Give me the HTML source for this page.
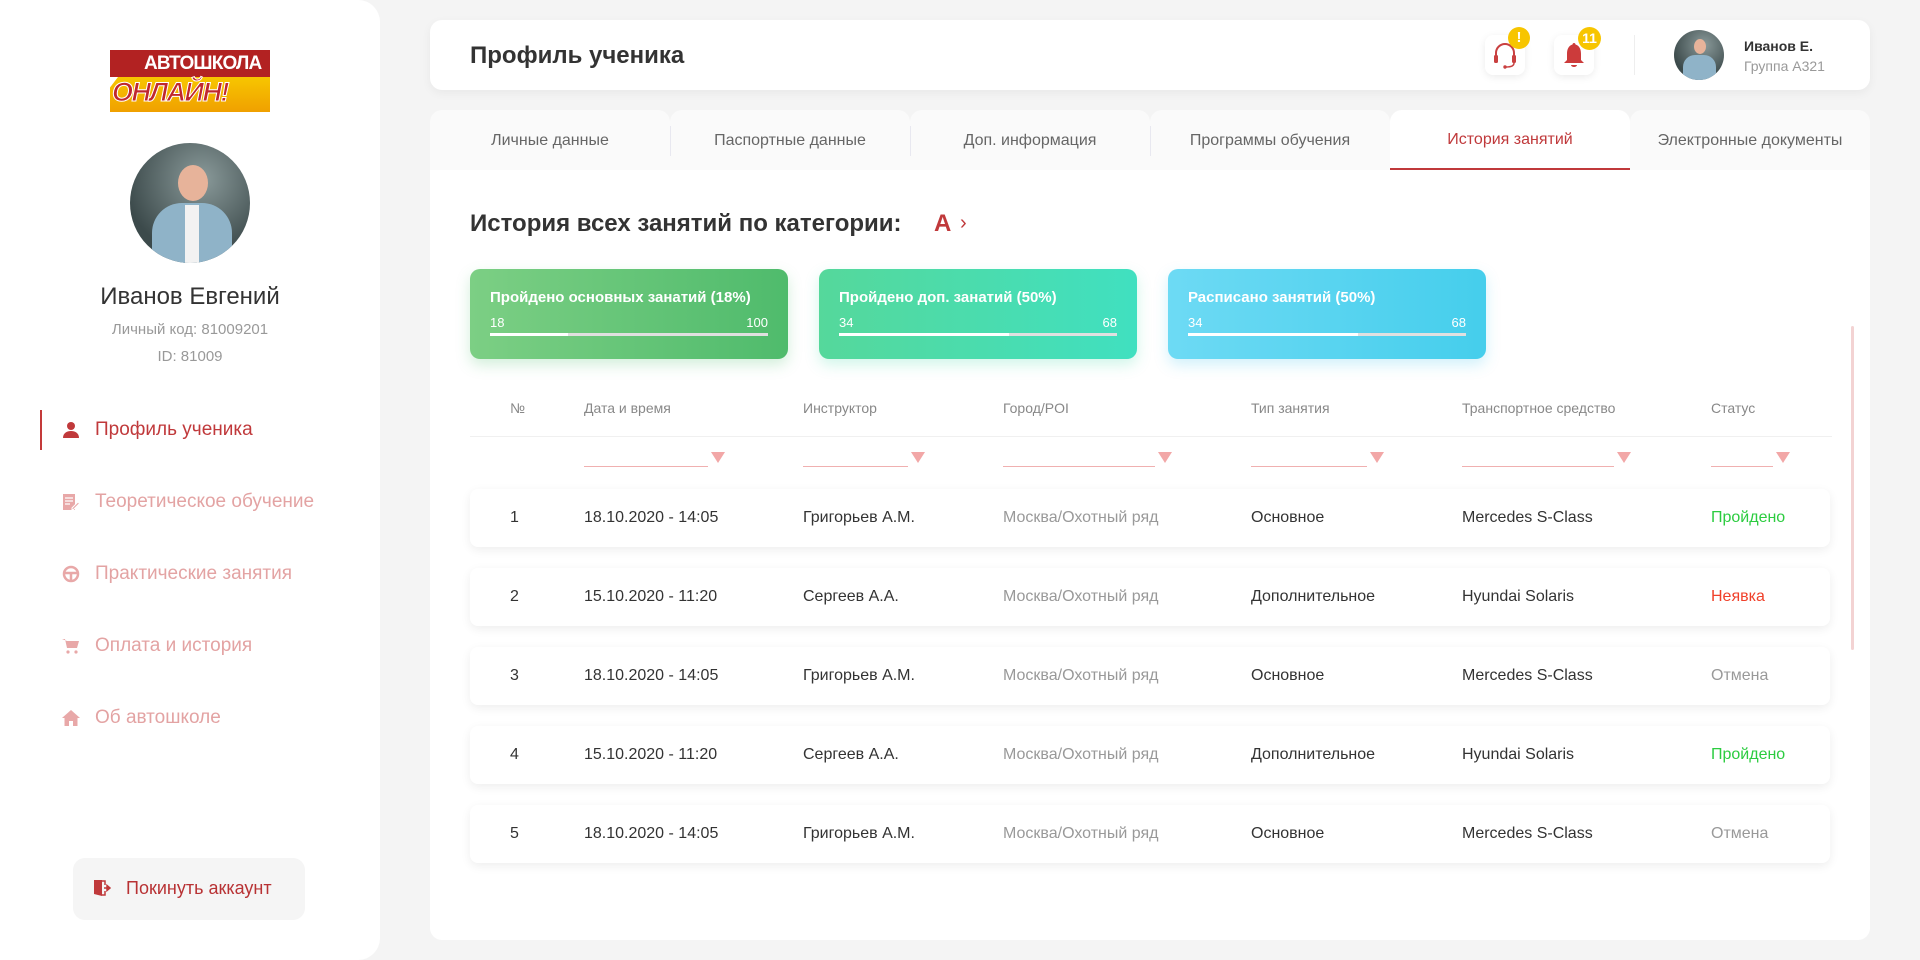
<!DOCTYPE html>
<html><head><meta charset="utf-8"><style>
*{box-sizing:border-box;margin:0;padding:0}
body{width:1920px;height:960px;background:#f4f4f4;font-family:"Liberation Sans",sans-serif;position:relative;overflow:hidden;color:#333}
.abs{position:absolute}
.side{left:0;top:0;width:380px;height:960px;background:#fff;border-radius:0 22px 22px 0}
.nav{position:absolute;left:62px;font-size:19px;color:#e3a3a3;display:flex;align-items:center;gap:15px;height:30px}
.nav svg{width:18px;height:18px}
.card{background:#fff;border-radius:12px}
.tab{position:absolute;top:110px;height:60px;width:240px;background:#fafafa;border-radius:12px 12px 0 0;font-size:16px;color:#666;display:flex;align-items:center;justify-content:center;padding-top:2px}
.stat{position:absolute;top:269px;width:318px;height:90px;border-radius:10px;color:#fff;padding:20px 20px}
.stat .t{font-size:15px;font-weight:bold}
.stat .n{display:flex;justify-content:space-between;font-size:13px;margin-top:9px}
.stat .b{height:3px;background:#e0e0e0;margin-top:3px;position:relative}
.stat .b i{position:absolute;left:0;top:0;height:3px;background:#fff}
.th{position:absolute;top:400px;font-size:14px;color:#888}
.flt{position:absolute;top:451px;height:16px;border-bottom:1px solid #f0b0b0}
.flt:after{content:"";position:absolute;right:-17px;top:1px;border-left:7px solid transparent;border-right:7px solid transparent;border-top:11px solid #f2a7a7}
.row{position:absolute;left:470px;width:1360px;height:58px;background:#fff;border-radius:8px;box-shadow:0 3px 10px rgba(0,0,0,.07);font-size:16px;color:#333}
.row span{position:absolute;top:20px}
.g{color:#999}
</style></head><body>
<div class="abs side"></div>
<!-- logo -->
<div class="abs" style="left:110px;top:50px;width:160px;height:62px;overflow:hidden">
<div style="position:absolute;left:0;top:0;width:160px;height:27px;background:#b22222"></div>
<div style="position:absolute;left:34px;top:3px;font-size:19px;font-weight:bold;color:#fff;letter-spacing:-0.8px">АВТОШКОЛА</div>
<div style="position:absolute;left:0;top:27px;width:160px;height:35px;background:linear-gradient(#f7c600,#f0a000);clip-path:polygon(5% 0,100% 0,100% 100%,0 100%,0 30%)"></div>
<div style="position:absolute;left:2px;top:27px;font-size:27px;font-weight:bold;font-style:italic;color:#c0272d;-webkit-text-stroke:1px #fff;letter-spacing:-1.5px">ОНЛАЙН!</div>
</div>
<!-- avatar -->
<div class="abs" style="left:130px;top:143px;width:120px;height:120px;border-radius:50%;background:radial-gradient(circle at 60% 30%,#8a9a9a,#3c4a4b 70%);overflow:hidden">
<div style="position:absolute;left:48px;top:22px;width:30px;height:36px;border-radius:50%;background:#e7b39a"></div>
<div style="position:absolute;left:22px;top:60px;width:80px;height:70px;border-radius:30px 30px 0 0;background:#8fb3c8"></div>
<div style="position:absolute;left:55px;top:62px;width:14px;height:60px;background:#f2f2f2"></div>
</div>
<div class="abs" style="left:0;width:380px;top:283px;text-align:center;font-size:24px;color:#333">Иванов Евгений</div>
<div class="abs" style="left:0;width:380px;top:321px;text-align:center;font-size:15px;color:#999">Личный код: 81009201</div>
<div class="abs" style="left:0;width:380px;top:348px;text-align:center;font-size:15px;color:#999">ID: 81009</div>
<div class="abs" style="left:40px;top:410px;width:2px;height:40px;background:#c43a3a"></div>
<div class="nav" style="top:415px;color:#c0393b"><svg viewBox="0 0 18 18"><circle cx="9" cy="5" r="4" fill="#c0393b"/><path d="M1 17c0-5 4-7 8-7s8 2 8 7z" fill="#c0393b"/></svg>Профиль ученика</div>
<div class="nav" style="top:487px"><svg viewBox="0 0 18 18"><rect x="1" y="1" width="12" height="16" fill="#e8a8a8"/><path d="M3 5h8M3 8h8M3 11h5" stroke="#fff" stroke-width="1.3"/><path d="M10 15l6-6 1.5 1.5-6 6H10z" fill="#e8a8a8" stroke="#fff"/></svg>Теоретическое обучение</div>
<div class="nav" style="top:559px"><svg viewBox="0 0 18 18"><circle cx="9" cy="9" r="7" fill="none" stroke="#e8a8a8" stroke-width="2.5"/><path d="M2 8h14M9 9v7" stroke="#e8a8a8" stroke-width="2.5"/></svg>Практические занятия</div>
<div class="nav" style="top:631px"><svg viewBox="0 0 18 18"><path d="M0 2h3l2 9h10l2-7H5" fill="#e8a8a8"/><circle cx="6" cy="15" r="1.6" fill="#e8a8a8"/><circle cx="14" cy="15" r="1.6" fill="#e8a8a8"/></svg>Оплата и история</div>
<div class="nav" style="top:703px"><svg viewBox="0 0 18 18"><path d="M9 1L0 9h2.5v8h4.5v-5h4v5h4.5V9H18z" fill="#e8a8a8"/></svg>Об автошколе</div>
<div class="abs" style="left:73px;top:858px;width:232px;height:62px;background:#f5f5f5;border-radius:12px"></div>
<svg class="abs" style="left:93px;top:879px" width="18" height="18" viewBox="0 0 18 18"><path d="M1 1h8v16l-8-2z" fill="#c0393b"/><path d="M9 2h3v4M12 12v4H9" stroke="#c0393b" fill="none" stroke-width="1.5"/><path d="M11 9h4M14 6.5l3 2.5-3 2.5z" fill="#c0393b" stroke="#c0393b" stroke-width="1.5"/></svg>
<div class="abs" style="left:126px;top:878px;font-size:18px;color:#b83234">Покинуть аккаунт</div>

<!-- header -->
<div class="abs card" style="left:430px;top:20px;width:1440px;height:70px;box-shadow:0 3px 10px rgba(0,0,0,.05)"></div>
<div class="abs" style="left:470px;top:42px;font-size:24px;font-weight:bold;color:#333">Профиль ученика</div>
<div class="abs" style="left:1485px;top:35px;width:40px;height:40px;background:#fff;border-radius:8px;box-shadow:0 2px 8px rgba(0,0,0,.08)"></div>
<svg class="abs" style="left:1491px;top:41px" width="28" height="28" viewBox="0 0 28 28"><path d="M5 16v-4a9 9 0 0118 0v4" fill="none" stroke="#c94040" stroke-width="2"/><rect x="3" y="14" width="4" height="8" rx="1.5" fill="#c94040"/><rect x="21" y="14" width="4" height="8" rx="1.5" fill="#c94040"/><path d="M23 22c0 3-4 4-8 4" fill="none" stroke="#c94040" stroke-width="1.5"/><circle cx="14" cy="26" r="1.7" fill="#c94040"/></svg>
<div class="abs" style="left:1508px;top:27px;width:22px;height:22px;border-radius:50%;background:#f7c500;color:#fff;font-size:15px;font-weight:bold;text-align:center;line-height:22px">!</div>
<div class="abs" style="left:1554px;top:35px;width:40px;height:40px;background:#fff;border-radius:8px;box-shadow:0 2px 8px rgba(0,0,0,.08)"></div>
<svg class="abs" style="left:1560px;top:41px" width="28" height="28" viewBox="0 0 28 28"><path d="M14 2c1 0 1.5.8 1.5 1.5C20 5 21 9 21 13v6l3 3H4l3-3v-6c0-4 1-8 5.5-9.5C12.5 2.8 13 2 14 2z" fill="#cc3b3b"/><path d="M11 24h6a3 2 0 01-6 0z" fill="#cc3b3b"/></svg>
<div class="abs" style="left:1578px;top:27px;width:23px;height:23px;border-radius:50%;background:#f7c500;color:#fff;font-size:14px;font-weight:bold;text-align:center;line-height:23px">11</div>
<div class="abs" style="left:1634px;top:35px;width:1px;height:40px;background:#eee"></div>
<div class="abs" style="left:1674px;top:30px;width:50px;height:50px;border-radius:50%;background:radial-gradient(circle at 60% 30%,#8a9a9a,#3c4a4b 70%);overflow:hidden"><div style="position:absolute;left:20px;top:9px;width:12px;height:15px;border-radius:50%;background:#e7b39a"></div><div style="position:absolute;left:9px;top:25px;width:33px;height:30px;border-radius:12px 12px 0 0;background:#8fb3c8"></div></div>
<div class="abs" style="left:1744px;top:38px;font-size:14px;font-weight:bold;color:#333">Иванов Е.</div>
<div class="abs" style="left:1744px;top:58px;font-size:14px;color:#999">Группа А321</div>

<!-- tabs -->
<div class="tab" style="left:430px">Личные данные</div>
<div class="tab" style="left:670px">Паспортные данные</div>
<div class="tab" style="left:910px">Доп. информация</div>
<div class="tab" style="left:1150px">Программы обучения</div>
<div class="tab" style="left:1630px">Электронные документы</div>
<div class="abs" style="left:670px;top:126px;width:1px;height:30px;background:#e8e8f0"></div>
<div class="abs" style="left:910px;top:126px;width:1px;height:30px;background:#e8e8f0"></div>
<div class="abs" style="left:1150px;top:126px;width:1px;height:30px;background:#e8e8f0"></div>
<div class="abs card" style="left:430px;top:170px;width:1440px;height:770px;border-radius:0 0 12px 12px"></div>
<div class="tab" style="left:1390px;background:#fff;color:#c0393b;border-bottom:2px solid #c0393b">История занятий</div>

<div class="abs" style="left:470px;top:210px;font-size:24px;font-weight:bold;color:#333">История всех занятий по категории:</div>
<div class="abs" style="left:934px;top:210px;font-size:24px;font-weight:bold;color:#c0393b">А</div>
<div class="abs" style="left:960px;top:212px;font-size:20px;color:#c0393b">›</div>

<div class="stat" style="left:470px;background:linear-gradient(90deg,#7ccf84,#4fbb6c);box-shadow:0 6px 14px rgba(80,190,110,.25)"><div class="t">Пройдено основных занатий (18%)</div><div class="n"><span>18</span><span>100</span></div><div class="b"><i style="width:28%"></i></div></div>
<div class="stat" style="left:819px;background:linear-gradient(90deg,#55d89b,#40e0c0);box-shadow:0 6px 14px rgba(70,220,170,.25)"><div class="t">Пройдено доп. занатий (50%)</div><div class="n"><span>34</span><span>68</span></div><div class="b"><i style="width:61%"></i></div></div>
<div class="stat" style="left:1168px;background:linear-gradient(90deg,#6ddaf4,#45ceec);box-shadow:0 6px 14px rgba(70,200,240,.25)"><div class="t">Расписано занятий (50%)</div><div class="n"><span>34</span><span>68</span></div><div class="b"><i style="width:61%"></i></div></div>

<div class="th" style="left:510px">№</div>
<div class="th" style="left:584px">Дата и время</div>
<div class="th" style="left:803px">Инструктор</div>
<div class="th" style="left:1003px">Город/POI</div>
<div class="th" style="left:1251px">Тип занятия</div>
<div class="th" style="left:1462px">Транспортное средство</div>
<div class="th" style="left:1711px">Статус</div>
<div class="abs" style="left:470px;top:436px;width:1362px;height:1px;background:#f0f0f0"></div>
<div class="flt" style="left:584px;width:124px"></div>
<div class="flt" style="left:803px;width:105px"></div>
<div class="flt" style="left:1003px;width:152px"></div>
<div class="flt" style="left:1251px;width:116px"></div>
<div class="flt" style="left:1462px;width:152px"></div>
<div class="flt" style="left:1711px;width:62px"></div>

<div class="row" style="top:489px"><span style="left:40px">1</span><span style="left:114px">18.10.2020 - 14:05</span><span style="left:333px">Григорьев А.М.</span><span class="g" style="left:533px">Москва/Охотный ряд</span><span style="left:781px">Основное</span><span style="left:992px">Mercedes S-Class</span><span style="left:1241px;color:#2ccc40">Пройдено</span></div>
<div class="row" style="top:568px"><span style="left:40px">2</span><span style="left:114px">15.10.2020 - 11:20</span><span style="left:333px">Сергеев А.А.</span><span class="g" style="left:533px">Москва/Охотный ряд</span><span style="left:781px">Дополнительное</span><span style="left:992px">Hyundai Solaris</span><span style="left:1241px;color:#f0402a">Неявка</span></div>
<div class="row" style="top:647px"><span style="left:40px">3</span><span style="left:114px">18.10.2020 - 14:05</span><span style="left:333px">Григорьев А.М.</span><span class="g" style="left:533px">Москва/Охотный ряд</span><span style="left:781px">Основное</span><span style="left:992px">Mercedes S-Class</span><span class="g" style="left:1241px">Отмена</span></div>
<div class="row" style="top:726px"><span style="left:40px">4</span><span style="left:114px">15.10.2020 - 11:20</span><span style="left:333px">Сергеев А.А.</span><span class="g" style="left:533px">Москва/Охотный ряд</span><span style="left:781px">Дополнительное</span><span style="left:992px">Hyundai Solaris</span><span style="left:1241px;color:#2ccc40">Пройдено</span></div>
<div class="row" style="top:805px"><span style="left:40px">5</span><span style="left:114px">18.10.2020 - 14:05</span><span style="left:333px">Григорьев А.М.</span><span class="g" style="left:533px">Москва/Охотный ряд</span><span style="left:781px">Основное</span><span style="left:992px">Mercedes S-Class</span><span class="g" style="left:1241px">Отмена</span></div>
<div class="abs" style="left:1851px;top:326px;width:3px;height:324px;background:#f3d3d3;border-radius:2px"></div>
</body></html>
